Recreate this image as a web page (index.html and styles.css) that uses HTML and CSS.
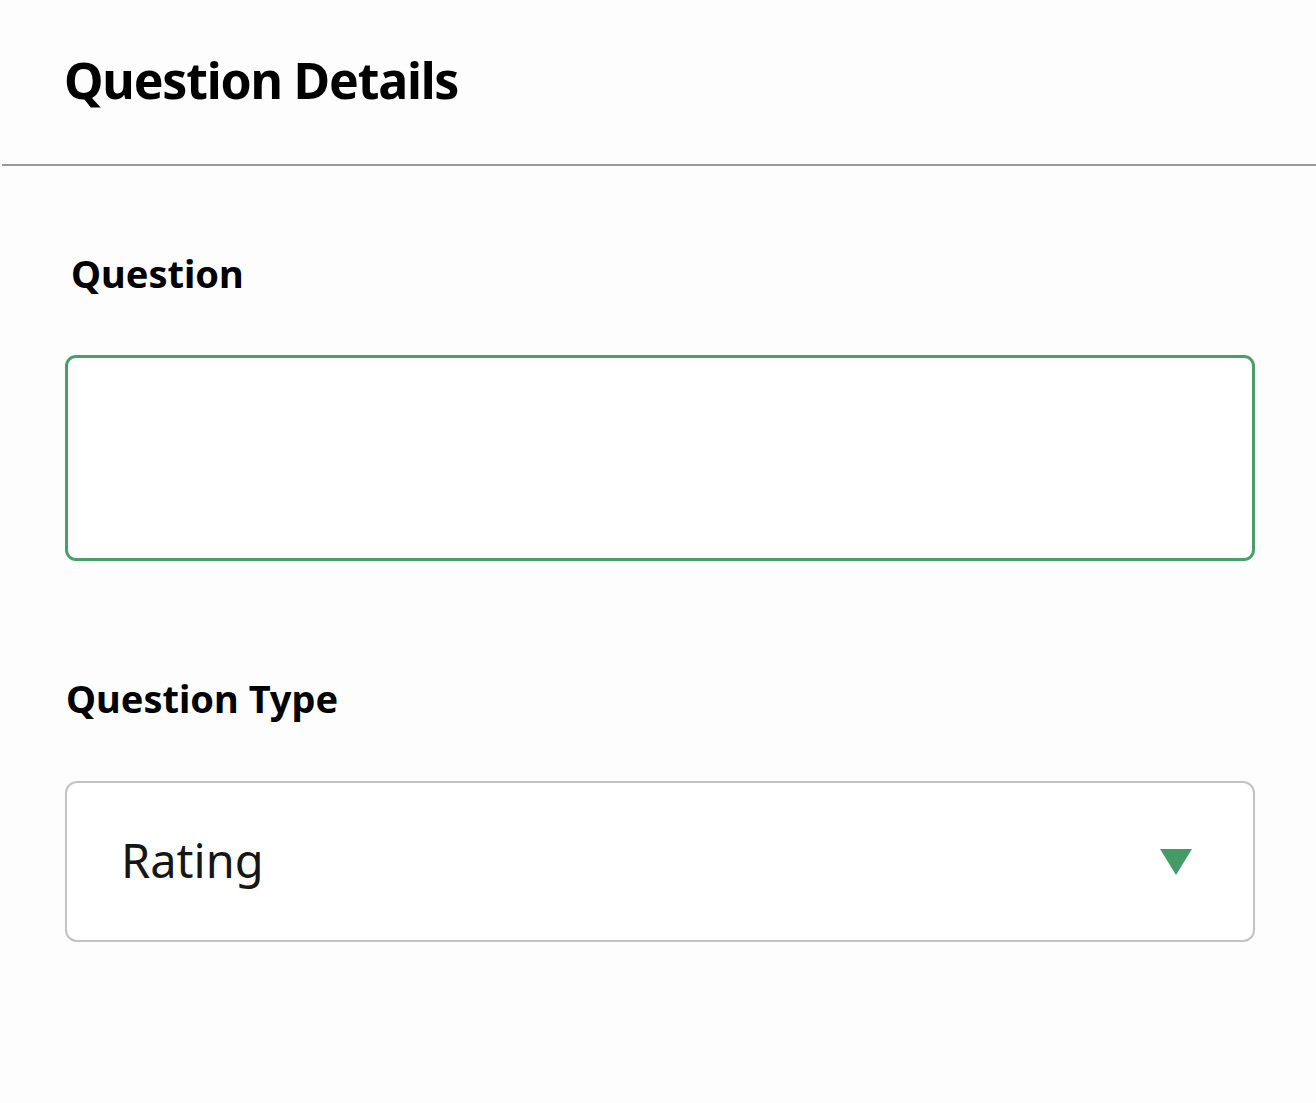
FILE: index.html
```html
<!DOCTYPE html>
<html lang="en">
<head>
  <meta charset="UTF-8" />
  <meta name="viewport" content="width=device-width, initial-scale=1.0"/>
  <title>Question Details</title>
  <link rel="stylesheet" href="styles.css">
</head>
<body>
  <div class="header">
    <h1>Question Details</h1>
  </div>

  <div class="form">
    <div class="field field-question">
      <label for="question">Question</label>
      <textarea id="question"></textarea>
    </div>

    <div class="field field-type">
      <label>Question Type</label>
      <div class="select">
        <span class="select-value">Rating</span>
        <svg class="select-arrow" width="32" height="26" viewBox="0 0 32 26">
          <path d="M0 0 H32 L16 26 Z" fill="#459a68"/>
        </svg>
      </div>
    </div>
  </div>
</body>
</html>
```

FILE: styles.css
```css
body {
  margin: 0;
  background: #fdfdfd;
  font-family: "Noto Sans", "Open Sans", sans-serif;
  color: #111;
}
.header {
  height: 164px;
  margin-left: 2px;
  border-bottom: 2px solid #9a9a9a;
  padding-left: 62px;
  box-sizing: content-box;
}
h1 {
  margin: 0;
  padding-top: 50px;
  font-size: 50px;
  line-height: 60px;
  font-weight: 700;
  letter-spacing: -1.2px;
  color: #000;
}
.form {
  padding: 84px 61px 0 65px;
}
.field label {
  display: block;
  font-size: 38px;
  line-height: 46px;
  font-weight: 700;
  color: #000;
}
.field-question label {
  padding-left: 6px;
}
.field-question textarea {
  display: block;
  width: 100%;
  height: 206px;
  margin-top: 59px;
  box-sizing: border-box;
  border: 3px solid #4a9e6a;
  border-radius: 11px;
  background: #fff;
  resize: none;
  outline: none;
}
.field-type {
  margin-top: 114px;
}
.field-type label {
  padding-left: 1px;
}
.select {
  display: flex;
  align-items: center;
  justify-content: space-between;
  height: 161px;
  margin-top: 60px;
  box-sizing: border-box;
  border: 2px solid #c2c2c2;
  border-radius: 12px;
  background: #fff;
  padding: 0 61px 0 54px;
}
.select-value {
  font-size: 47px;
  color: #161616;
  margin-top: -4px;
}
.select-arrow {
  display: block;
}
```
